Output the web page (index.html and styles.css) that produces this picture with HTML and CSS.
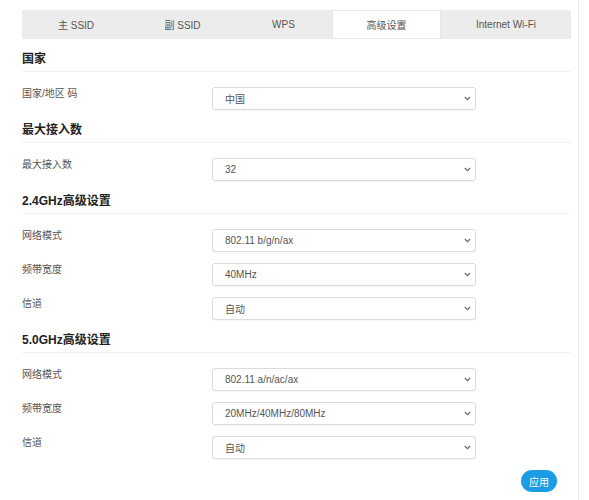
FILE: index.html
```html
<!DOCTYPE html>
<html lang="zh-CN">
<head>
<meta charset="utf-8">
<title>高级设置</title>
<link rel="stylesheet" href="styles.css">
</head>
<body>
<div class="page">
  <div class="panel">
    <nav class="tabs">
      <div class="tab">主 SSID</div>
      <div class="tab">副 SSID</div>
      <div class="tab">WPS</div>
      <div class="tab active">高级设置</div>
      <div class="tab">Internet Wi-Fi</div>
    </nav>

    <section class="section">
      <h2 class="section-title">国家</h2>
      <div class="rows">
        <div class="row">
          <label class="label">国家/地区 码</label>
          <div class="select"><span>中国</span><svg class="chev" width="7" height="5" viewBox="0 0 7 5"><path d="M0.8 1 L3.5 3.7 L6.2 1" fill="none" stroke="#666" stroke-width="1.1"/></svg></div>
        </div>
      </div>
    </section>

    <section class="section">
      <h2 class="section-title">最大接入数</h2>
      <div class="rows">
        <div class="row">
          <label class="label">最大接入数</label>
          <div class="select"><span>32</span><svg class="chev" width="7" height="5" viewBox="0 0 7 5"><path d="M0.8 1 L3.5 3.7 L6.2 1" fill="none" stroke="#666" stroke-width="1.1"/></svg></div>
        </div>
      </div>
    </section>

    <section class="section">
      <h2 class="section-title">2.4GHz高级设置</h2>
      <div class="rows">
        <div class="row">
          <label class="label">网络模式</label>
          <div class="select"><span>802.11 b/g/n/ax</span><svg class="chev" width="7" height="5" viewBox="0 0 7 5"><path d="M0.8 1 L3.5 3.7 L6.2 1" fill="none" stroke="#666" stroke-width="1.1"/></svg></div>
        </div>
        <div class="row">
          <label class="label">频带宽度</label>
          <div class="select"><span>40MHz</span><svg class="chev" width="7" height="5" viewBox="0 0 7 5"><path d="M0.8 1 L3.5 3.7 L6.2 1" fill="none" stroke="#666" stroke-width="1.1"/></svg></div>
        </div>
        <div class="row">
          <label class="label">信道</label>
          <div class="select"><span>自动</span><svg class="chev" width="7" height="5" viewBox="0 0 7 5"><path d="M0.8 1 L3.5 3.7 L6.2 1" fill="none" stroke="#666" stroke-width="1.1"/></svg></div>
        </div>
      </div>
    </section>

    <section class="section">
      <h2 class="section-title">5.0GHz高级设置</h2>
      <div class="rows">
        <div class="row">
          <label class="label">网络模式</label>
          <div class="select"><span>802.11 a/n/ac/ax</span><svg class="chev" width="7" height="5" viewBox="0 0 7 5"><path d="M0.8 1 L3.5 3.7 L6.2 1" fill="none" stroke="#666" stroke-width="1.1"/></svg></div>
        </div>
        <div class="row">
          <label class="label">频带宽度</label>
          <div class="select"><span>20MHz/40MHz/80MHz</span><svg class="chev" width="7" height="5" viewBox="0 0 7 5"><path d="M0.8 1 L3.5 3.7 L6.2 1" fill="none" stroke="#666" stroke-width="1.1"/></svg></div>
        </div>
        <div class="row">
          <label class="label">信道</label>
          <div class="select"><span>自动</span><svg class="chev" width="7" height="5" viewBox="0 0 7 5"><path d="M0.8 1 L3.5 3.7 L6.2 1" fill="none" stroke="#666" stroke-width="1.1"/></svg></div>
        </div>
      </div>
    </section>

    <div class="actions">
      <button class="btn-apply">应用</button>
    </div>
  </div>
</div>
</body>
</html>
```

FILE: styles.css
```css
html, body {
  margin: 0;
  padding: 0;
  background: #ffffff;
}

body {
  font-family: "Liberation Sans", "Noto Sans CJK SC", sans-serif;
  color: #555;
}

.page {
  width: 556px;
  min-height: 500px;
  padding-left: 22px;
  border-right: 1px solid #ebebeb;
  box-sizing: content-box;
}

.panel {
  width: 549px;
  padding-top: 10px;
}

.tabs {
  display: grid;
  grid-template-columns: 108px 105px 97px 109px 130px;
  height: 29px;
  background: #ececec;
}

.tab {
  display: flex;
  align-items: center;
  justify-content: center;
  font-size: 10px;
  color: #555;
}

.tab.active {
  background: #ffffff;
  box-shadow: inset 0 0 0 1px #e6e6e6;
}

.section-title {
  margin: 10px 0 0;
  padding-bottom: 2px;
  line-height: 20px;
  font-size: 12px;
  font-weight: bold;
  color: #222;
  border-bottom: 1px solid #f1f1f1;
}

.rows {
  display: flex;
  flex-direction: column;
  gap: 11px;
  padding-top: 15px;
}

.row {
  display: flex;
  align-items: flex-start;
}

.label {
  width: 190px;
  font-size: 10px;
  line-height: 14px;
  color: #555;
}

.select {
  width: 264px;
  height: 23px;
  box-sizing: border-box;
  border: 1px solid #dcdcdc;
  border-radius: 3px;
  box-shadow: 0 1px 1px rgba(0, 0, 0, 0.04);
  display: flex;
  align-items: center;
  justify-content: space-between;
  padding: 0 4px 0 12px;
  font-size: 10px;
  color: #555;
}

.chev {
  display: block;
}

.actions {
  display: flex;
  justify-content: flex-end;
  padding-right: 14px;
  margin-top: 11px;
}

.btn-apply {
  width: 36px;
  height: 22px;
  border: none;
  border-radius: 11px;
  background: #1a9de6;
  color: #fff;
  font-family: "Liberation Sans", "Noto Sans CJK SC", sans-serif;
  font-size: 10px;
  padding: 0;
}
```
